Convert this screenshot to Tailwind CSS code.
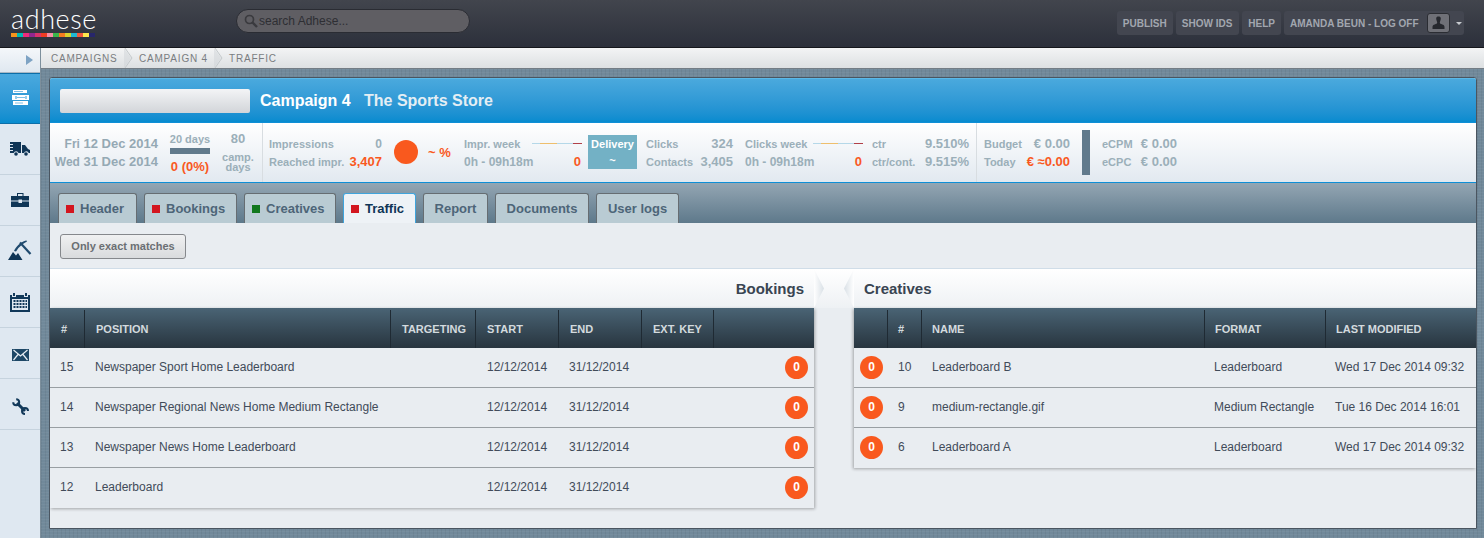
<!DOCTYPE html>
<html lang="en"><head><meta charset="utf-8"><title>Adhese</title>
<script src="https://cdn.jsdelivr.net/npm/@tailwindcss/browser@4"></script></head>
<body class="m-0 h-[538px] w-[1484px] overflow-hidden bg-[#dfe8f1] font-['Liberation_Sans',Arial,sans-serif]">
<header class="flex h-[48px] items-start border-b border-[#15171c] bg-gradient-to-b from-[#42454d] to-[#2c303b]">
  <div class="ml-[11px] flex w-[84px] flex-col">
    <span class="h-[33px] font-['Lato',sans-serif] text-[27px] leading-[38px] font-light tracking-[.6px] text-white">adhese</span>
    <div class="flex h-[4px]">
      <i class="flex-1 bg-[#f7941d]"></i><i class="flex-1 bg-[#00b9b4]"></i><i class="flex-1 bg-[#ee2a7b]"></i><i class="flex-1 bg-[#92278f]"></i><i class="flex-1 bg-[#d7336c]"></i><i class="flex-1 bg-[#ef3b24]"></i><i class="flex-1 bg-[#f78da7]"></i><i class="flex-1 bg-[#39b54a]"></i><i class="flex-1 bg-[#f47b20]"></i><i class="flex-1 bg-[#d7d12f]"></i><i class="flex-1 bg-[#1fb8d3]"></i><i class="flex-1 bg-[#f15a3c]"></i><i class="flex-1 bg-[#fee94e]"></i><i class="flex-1 bg-[#27266b]"></i>
    </div>
  </div>
  <div class="mt-[9px] ml-[141px] flex h-[24px] w-[234px] items-center rounded-full border border-[#2a2c33] bg-[#5f5e63] pl-[7px]">
    <svg class="h-[14px] w-[14px]" viewBox="0 0 14 14" fill="none" stroke="#3a3a3e" stroke-width="1.7"><circle cx="5.5" cy="5.5" r="4"/><path d="M8.5 8.5L13 13" stroke-width="2.4"/></svg>
    <span class="ml-[1px] text-[12px] text-[#2e2e33]">search Adhese...</span>
  </div>
  <nav class="mt-[11px] ml-auto mr-[20px] flex h-[24px] gap-[3px] text-[10px] font-bold text-[#a2a6af]">
    <a class="flex items-center rounded-[3px] bg-[#434650] px-[6px]">PUBLISH</a>
    <a class="flex items-center rounded-[3px] bg-[#434650] pr-[7px] pl-[6px]">SHOW IDS</a>
    <a class="flex items-center rounded-[3px] bg-[#434650] px-[6px]">HELP</a>
    <a class="flex w-[180px] items-center rounded-[3px] bg-[#434650] pl-[6px]">AMANDA BEUN - LOG OFF
      <span class="ml-[8px] flex h-[20px] w-[23px] items-end justify-center rounded-[3px] border border-[#2b2d33] bg-[#6f7077]">
        <svg class="h-[16px] w-[15px]" viewBox="0 0 15 16" fill="#26282e"><path d="M5.2 2.5C5.2 1 6.2.5 7.5.5s2.3.5 2.3 2c0 1.5-.7 2.6-1 4 0 1 1 1.5 2.5 2 1.2.4 2.2 1 2.2 2.500v2H1.500v-2c0-1.500 1-2.100 2.200-2.500 1.500-.5 2.500-1 2.500-2-.3-1.400-1-2.500-1-4z"/></svg>
      </span>
      <span class="ml-[6px] h-0 w-0 border-x-[3px] border-t-[3px] border-x-transparent border-t-[#c8cbd0]"></span>
    </a>
  </nav>
</header>
<div class="flex h-[490px]">
  <aside class="w-[41px] shrink-0 border-r border-[#7d8f9c] bg-[#dfe8f1]">
    <div class="flex h-[25px] items-center justify-end border-b border-[#aab8c4] bg-gradient-to-b from-[#f4f7fa] to-[#e0e8f0] pr-[7px]">
      <span class="h-0 w-0 border-y-[5px] border-l-[7px] border-y-transparent border-l-[#7ea3c4]"></span>
    </div>
    <div class="flex h-[51px] items-center justify-center border-y border-[#0d6ea8] bg-gradient-to-b from-[#4aa9de] to-[#078ccf] pb-[3px]">
      <svg class="h-[15px] w-[17px]" viewBox="0 0 17 15"><path d="M1 0h14v3H1zM0 5h17v5H0zM1 11h15v4H1z" fill="#fff"/><path d="M2 1.500h9M3 13h8M5 7.500h8" stroke="#7fc0e6" stroke-width="1" fill="none"/><path d="M3.500 6h1v3h-1zM13.500 6h1v3h-1z" fill="#2b9bd8"/></svg>
    </div>
    <div class="flex h-[51px] items-center justify-center border-b border-[#c6d3de]">
      <svg class="h-[14px] w-[20px]" viewBox="0 0 20 14" fill="#0f3556"><path d="M0 0h11v11H8.500a2.500 2.500 0 0 0-4.800 0H0V9h3V8H0V6h3V5H0V3h3V2H0z"/><path d="M12 3h3l3 4 2 1v3h-1.300a2.500 2.500 0 0 0-4.700 0H12z"/><circle cx="6" cy="12" r="1.800"/><circle cx="16" cy="12" r="1.800"/></svg>
    </div>
    <div class="flex h-[51px] items-center justify-center border-b border-[#c6d3de]">
      <svg class="h-[14px] w-[18px]" viewBox="0 0 18 14" fill="#0f3556"><path d="M6 0h6.500v3H11.500V1H7v2H6z"/><path d="M0 3h18v4.500h-7V6.500H7.500v1H0z"/><path d="M0 8.500h7.500v1.500H11V8.500h7V14H0z"/></svg>
    </div>
    <div class="flex h-[51px] items-center justify-center border-b border-[#c6d3de] pb-[2px]">
      <svg class="h-[20px] w-[24px]" viewBox="0 0 24 20"><path d="M0 20l5-8 3 3.500 2-2.500 4.500 7z" fill="#0f3556"/><path d="M12 2.500L22.500 14" stroke="#1f4a6e" stroke-width="2.2" fill="none"/><path d="M6 11C8 6.500 12 2.500 18 .5c.5 0 1 .5 1 1C15 3.500 11 6.500 8 11.500z" fill="#1f4a6e"/></svg>
    </div>
    <div class="flex h-[51px] items-center justify-center border-b border-[#c6d3de]">
      <svg class="h-[19px] w-[20px]" viewBox="0 0 20 19" fill="#12395a"><path d="M3 0h2v3H3zM15 0h2v3h-2zM0 2h2v2h4V2h8v2h4V2h2v17H0zM2 6v11h16V6z" fill-rule="evenodd"/><path d="M3.500 7h2v2h-2zM6.500 7h2v2h-2zM9.500 7h2v2h-2zM12.500 7h2v2h-2zM15.500 7h1.500v2h-1.500zM3.500 10h2v2h-2zM6.500 10h2v2h-2zM9.500 10h2v2h-2zM12.500 10h2v2h-2zM15.500 10h1.500v2h-1.500zM3.500 13h2v2h-2zM6.500 13h2v2h-2zM9.500 13h2v2h-2zM12.500 13h2v2h-2zM15.500 13h1.500v2h-1.500z"/></svg>
    </div>
    <div class="flex h-[51px] items-center justify-center border-b border-[#c6d3de] pt-[4px]">
      <svg class="h-[12px] w-[17px]" viewBox="0 0 17 12"><path d="M0 0h17v12H0z" fill="#1d4766"/><path d="M1.500 1l7 6 7-6M1.500 11l4.500-5.500M15.500 11L11 5.500" fill="none" stroke="#e8eef4" stroke-width="1.200"/></svg>
    </div>
    <div class="flex h-[51px] items-center justify-center border-b border-[#c6d3de] pt-[4px]">
      <svg class="h-[17px] w-[17px]" viewBox="0 0 17 17" fill="none" stroke="#12395a"><path d="M5 5l8 8" stroke-width="3"/><path d="M4.200 1.200A3 3 0 1 1 1.200 4.200" stroke-width="2"/><path d="M16 13A3 3 0 1 0 13 16" stroke-width="2"/></svg>
    </div>
  </aside>
  <main class="min-w-0 flex-1 bg-[#71899a] bg-[repeating-linear-gradient(0deg,#ffffff0a_0_1px,#0000_1px_3px),repeating-linear-gradient(90deg,#0000000d_0_1px,#0000_1px_4px)]">
    <div class="flex h-[21px] items-center border-b border-[#747d85] bg-gradient-to-b from-[#f3f4f5] to-[#dde0e2] pl-[10px] text-[10px] tracking-[.8px] text-[#7a7d81]">
      <span class="w-[73px]">CAMPAIGNS</span>
      <svg class="h-[20px] w-[15px]" viewBox="0 0 15 20" fill="none"><path d="M1 0l7 10-7 10" stroke="#c4c8cb"/><path d="M0 0l7 10-7 10z" fill="#d0d4d8" opacity=".5"/></svg>
      <span class="w-[75px]">CAMPAIGN 4</span>
      <svg class="h-[20px] w-[15px]" viewBox="0 0 15 20" fill="none"><path d="M1 0l7 10-7 10" stroke="#c4c8cb"/><path d="M0 0l7 10-7 10z" fill="#d0d4d8" opacity=".5"/></svg>
      <span>TRAFFIC</span>
    </div>
    <div class="pt-[8px] pr-[7px] pl-[8px]">
      <section class="h-[452px] overflow-hidden rounded-t-[3px] border border-[#4a5560] bg-[#e9edf1]">
        <div class="flex h-[44px] items-center border-t border-[#5cb8e6] bg-gradient-to-b from-[#4aa9dd] to-[#068bcf] pl-[10px] font-bold">
          <div class="h-[24px] w-[190px] rounded-[2px] bg-gradient-to-b from-[#f3f4f6] to-[#d2d5d9]"></div>
          <span class="ml-[10px] w-[104px] text-[16px] text-white">Campaign 4</span>
          <span class="text-[16px] text-[#e4eef4]">The Sports Store</span>
        </div>
        <div class="flex h-[61px] border-y border-[#0f8fd6] bg-gradient-to-b from-white to-[#e2e9f0] text-[11px] leading-[18px] font-bold text-[#9bafb9]">
          <div class="flex w-[213px] shrink-0 border-r border-[#d8dde1] pt-[12px]">
            <div class="w-[108px] shrink-0 text-right text-[13px] text-[#95a9b4]"><div><span class="text-[12px]">Fri</span> 12 Dec 2014</div><div><span class="text-[12px]">Wed</span> 31 Dec 2014</div></div>
            <div class="ml-[12px] flex w-[40px] shrink-0 -translate-y-[3px] flex-col items-center"><span class="text-[11px] leading-[14px] whitespace-nowrap">20 days</span><i class="mt-[2px] block h-[6px] w-[40px] bg-[#617a8c]"></i><span class="mt-[5px] text-[13px] leading-[16px] whitespace-nowrap text-[#f9591e]">0 (0%)</span></div>
            <div class="ml-[8px] flex w-[40px] shrink-0 -translate-y-[3px] flex-col items-center leading-[10px]"><span class="text-[13px] leading-[14px]">80</span><span class="mt-[6px]">camp.</span><span>days</span></div>
          </div>
          <div class="flex pt-[12px] pl-[6px]">
            <div class="grid w-[113px] grid-cols-[auto_1fr] content-start text-right"><span class="text-left">Impressions</span><span class="text-[12px]">0</span><span class="text-left">Reached impr.</span><span class="text-[13px] text-[#f9591e]">3,407</span></div>
            <i class="mt-[5px] ml-[12px] block h-[24px] w-[24px] rounded-full bg-[#f9591e]"></i>
            <span class="mt-[9px] ml-[10px] w-[36px] text-[13px] text-[#f9591e]">~ %</span>
            <div class="grid w-[118px] grid-cols-[68px_1fr] content-start"><span>Impr. week</span><span class="mt-[-1px] flex h-[1px] self-center"><i class="w-[8px] bg-[#b5d8e8]"></i><i class="w-[17px] bg-[#eebf6d]"></i><i class="w-[16px] bg-[#b5d8e8]"></i><i class="w-[9px] bg-[#b04048]"></i></span><span class="text-[12px] whitespace-nowrap">0h - 09h18m</span><span class="pr-[1px] text-right text-[13px] text-[#f9591e]">0</span></div>
            <div class="ml-[6px] flex h-[34px] w-[49px] flex-col items-center justify-center bg-[#73b1c5] text-white leading-[16px]"><span>Delivery</span><span>~</span></div>
            <div class="ml-[9px] grid w-[87px] grid-cols-[auto_1fr] content-start text-right"><span class="text-left">Clicks</span><span class="text-[13px]">324</span><span class="text-left">Contacts</span><span class="text-[13px]">3,405</span></div>
            <div class="ml-[12px] grid w-[118px] grid-cols-[68px_1fr] content-start"><span>Clicks week</span><span class="mt-[-1px] flex h-[1px] self-center"><i class="w-[8px] bg-[#b5d8e8]"></i><i class="w-[17px] bg-[#eebf6d]"></i><i class="w-[16px] bg-[#b5d8e8]"></i><i class="w-[9px] bg-[#b04048]"></i></span><span class="text-[12px] whitespace-nowrap">0h - 09h18m</span><span class="pr-[1px] text-right text-[13px] text-[#f9591e]">0</span></div>
            <div class="ml-[9px] grid w-[97px] grid-cols-[auto_1fr] content-start text-right"><span class="text-left">ctr</span><span class="text-[13px]">9.510%</span><span class="text-left">ctr/cont.</span><span class="text-[13px]">9.515%</span></div>
          </div>
          <div class="ml-[7px] flex border-l border-[#d8dde1] pt-[12px] pl-[7px]">
            <div class="grid w-[86px] grid-cols-[auto_1fr] content-start text-right"><span class="text-left">Budget</span><span class="text-[13px]">€ 0.00</span><span class="text-left">Today</span><span class="text-[13px] text-[#f9591e]">€ ≈0.00</span></div>
            <i class="-mt-[5px] ml-[12px] block h-[45px] w-[8px] bg-[#617a8c]"></i>
            <div class="ml-[12px] grid w-[75px] grid-cols-[auto_1fr] content-start text-right"><span class="text-left">eCPM</span><span class="text-[13px]">€ 0.00</span><span class="text-left">eCPC</span><span class="text-[13px]">€ 0.00</span></div>
          </div>
        </div>
        <div class="flex h-[40px] items-end gap-[7px] bg-gradient-to-b from-[#94a6b3] to-[#5e798b] pl-[8px] text-[13px] font-bold text-[#4d6578]">
          <a class="flex h-[30px] w-[79px] items-center rounded-t-[3px] border border-b-0 border-[#666d72] bg-[#b9cbd3] pl-[7px]"><i class="mr-[6px] block h-[8px] w-[8px] bg-[#d3161f]"></i>Header</a>
          <a class="flex h-[30px] w-[93px] items-center rounded-t-[3px] border border-b-0 border-[#666d72] bg-[#b9cbd3] pl-[7px]"><i class="mr-[6px] block h-[8px] w-[8px] bg-[#d3161f]"></i>Bookings</a>
          <a class="flex h-[30px] w-[92px] items-center rounded-t-[3px] border border-b-0 border-[#666d72] bg-[#b9cbd3] pl-[7px]"><i class="mr-[6px] block h-[8px] w-[8px] bg-[#12781e]"></i>Creatives</a>
          <a class="flex h-[30px] w-[73px] items-center rounded-t-[3px] border border-b-0 border-[#3fa4dc] bg-[#eef2f6] pl-[7px] text-[#0f3556]"><i class="mr-[6px] block h-[8px] w-[8px] bg-[#d3161f]"></i>Traffic</a>
          <a class="flex h-[30px] w-[65px] items-center justify-center rounded-t-[3px] border border-b-0 border-[#666d72] bg-[#b9cbd3]">Report</a>
          <a class="flex h-[30px] w-[94px] items-center justify-center rounded-t-[3px] border border-b-0 border-[#666d72] bg-[#b9cbd3]">Documents</a>
          <a class="flex h-[30px] w-[83px] items-center justify-center rounded-t-[3px] border border-b-0 border-[#666d72] bg-[#b9cbd3]">User logs</a>
        </div>
        <div class="h-[46px] border-b border-[#d0dde8] pt-[10px] pl-[10px]">
          <button class="h-[25px] w-[126px] rounded-[3px] border border-[#85888c] bg-gradient-to-b from-[#f0f1f2] to-[#d9dbdd] text-[11px] font-bold text-[#6b6f73]">Only exact matches</button>
        </div>
        <div class="flex h-[39px] bg-gradient-to-b from-white to-[#eef1f4] pt-[1px] text-[15px] font-bold text-[#394552]">
          <div class="flex w-[764px] shrink-0 items-center justify-end pr-[10px]">Bookings</div>
          <svg class="-mt-[1px] h-[39px] w-[40px] shrink-0" viewBox="0 0 40 39"><defs><linearGradient id="chevL" x1="0" x2="1" y1="0" y2="0"><stop offset="0" stop-color="#fff"/><stop offset="1" stop-color="#d9e0e6"/></linearGradient><linearGradient id="chevR" x1="1" x2="0" y1="0" y2="0"><stop offset="0" stop-color="#fff"/><stop offset="1" stop-color="#d9e0e6"/></linearGradient></defs><path d="M0 0l10 19.500L0 39z" fill="url(#chevL)"/><path d="M40 0L30 19.500 40 39z" fill="url(#chevR)"/></svg>
          <div class="flex flex-1 items-center pl-[10px]">Creatives</div>
        </div>
        <div class="flex items-start">
          <div class="w-[764px] shrink-0 shadow-[1px_1px_3px_#0000004d]">
            <div class="grid h-[40px] grid-cols-[35px_306px_85px_83px_83px_72px_100px] bg-gradient-to-b from-[#4a6475] to-[#28353f] pt-[2px] text-[11px] font-bold text-[#d3dade] [&>span]:flex [&>span]:items-center [&>span]:border-r [&>span]:border-[#1f2a33] [&>span]:pl-[11px]">
              <span>#</span><span>POSITION</span><span>TARGETING</span><span>START</span><span>END</span><span>EXT. KEY</span><span class="border-r-0!"></span>
            </div>
            <div class="grid h-[40px] grid-cols-[35px_392px_82px_216px_1fr] items-center border-b border-[#999fa3] pl-[10px] text-[12px] leading-[17px] text-[#414b59]"><span>15</span><span>Newspaper Sport Home Leaderboard</span><span>12/12/2014</span><span>31/12/2014</span><span class="flex h-[23px] w-[23px] items-center justify-center rounded-full bg-[#f9591e] text-[12px] font-bold text-white">0</span></div>
            <div class="grid h-[40px] grid-cols-[35px_392px_82px_216px_1fr] items-center border-b border-[#999fa3] pl-[10px] text-[12px] leading-[17px] text-[#414b59]"><span>14</span><span>Newspaper Regional News Home Medium Rectangle</span><span>12/12/2014</span><span>31/12/2014</span><span class="flex h-[23px] w-[23px] items-center justify-center rounded-full bg-[#f9591e] text-[12px] font-bold text-white">0</span></div>
            <div class="grid h-[40px] grid-cols-[35px_392px_82px_216px_1fr] items-center border-b border-[#999fa3] pl-[10px] text-[12px] leading-[17px] text-[#414b59]"><span>13</span><span>Newspaper News Home Leaderboard</span><span>12/12/2014</span><span>31/12/2014</span><span class="flex h-[23px] w-[23px] items-center justify-center rounded-full bg-[#f9591e] text-[12px] font-bold text-white">0</span></div>
            <div class="grid h-[40px] grid-cols-[35px_392px_82px_216px_1fr] items-center border-b border-transparent pl-[10px] text-[12px] leading-[17px] text-[#414b59]"><span>12</span><span>Leaderboard</span><span>12/12/2014</span><span>31/12/2014</span><span class="flex h-[23px] w-[23px] items-center justify-center rounded-full bg-[#f9591e] text-[12px] font-bold text-white">0</span></div>
          </div>
          <div class="ml-[40px] flex-1 shadow-[-1px_1px_3px_#0000004d]">
            <div class="grid h-[40px] grid-cols-[34px_34px_283px_121px_1fr] bg-gradient-to-b from-[#4a6475] to-[#28353f] pt-[2px] text-[11px] font-bold text-[#d3dade] [&>span]:flex [&>span]:items-center [&>span]:border-r [&>span]:border-[#1f2a33] [&>span]:pl-[10px]">
              <span></span><span>#</span><span>NAME</span><span>FORMAT</span><span class="border-r-0!">LAST MODIFIED</span>
            </div>
            <div class="grid h-[40px] grid-cols-[38px_34px_282px_121px_1fr] items-center border-b border-[#999fa3] pl-[6px] text-[12px] leading-[17px] text-[#414b59]"><span class="flex h-[23px] w-[23px] items-center justify-center rounded-full bg-[#f9591e] text-[12px] font-bold text-white">0</span><span>10</span><span>Leaderboard B</span><span>Leaderboard</span><span class="whitespace-nowrap">Wed 17 Dec 2014 09:32</span></div>
            <div class="grid h-[40px] grid-cols-[38px_34px_282px_121px_1fr] items-center border-b border-[#999fa3] pl-[6px] text-[12px] leading-[17px] text-[#414b59]"><span class="flex h-[23px] w-[23px] items-center justify-center rounded-full bg-[#f9591e] text-[12px] font-bold text-white">0</span><span>9</span><span>medium-rectangle.gif</span><span>Medium Rectangle</span><span class="whitespace-nowrap">Tue 16 Dec 2014 16:01</span></div>
            <div class="grid h-[40px] grid-cols-[38px_34px_282px_121px_1fr] items-center border-b border-transparent pl-[6px] text-[12px] leading-[17px] text-[#414b59]"><span class="flex h-[23px] w-[23px] items-center justify-center rounded-full bg-[#f9591e] text-[12px] font-bold text-white">0</span><span>6</span><span>Leaderboard A</span><span>Leaderboard</span><span class="whitespace-nowrap">Wed 17 Dec 2014 09:32</span></div>
          </div>
        </div>
      </section>
    </div>
  </main>
</div>
</body></html>
